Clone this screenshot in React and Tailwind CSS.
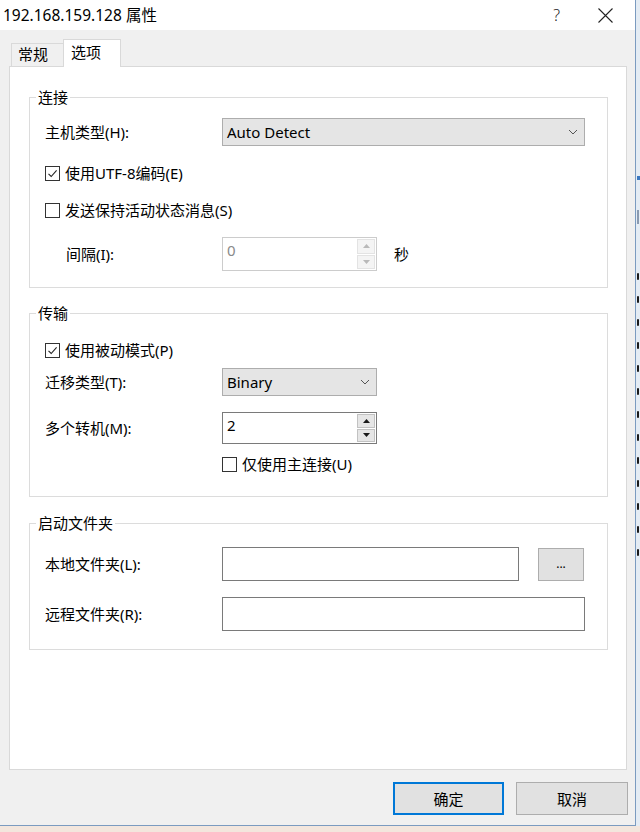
import React from "react";

const FONT = { fontFamily: "'Noto Sans', 'Noto Sans CJK SC', sans-serif" };

function CheckBox({ checked, label }) {
  return (
    <div className="flex items-center h-[20px]">
      <div className="w-[15px] h-[15px] border border-[#333333] bg-white flex items-center justify-center">
        {checked && (
          <svg width="13" height="13" viewBox="0 0 13 13">
            <path d="M2.5 6.8 L5.2 9.5 L10.6 3.4" fill="none" stroke="#222" strokeWidth="1.1" />
          </svg>
        )}
      </div>
      <span className="ml-[5px] text-[15px] leading-[20px] text-black">{label}</span>
    </div>
  );
}

function Chevron() {
  return (
    <svg width="10" height="6" viewBox="0 0 10 6">
      <path d="M1 1 L5 5 L9 1" fill="none" stroke="#555" strokeWidth="1" />
    </svg>
  );
}

function Select({ value, className }) {
  return (
    <div className={"h-[28px] bg-[#e5e5e5] border border-[#adadad] flex items-center pl-[4px] pr-[6px] " + className}>
      <span className="flex-1 text-[15px] leading-[20px] text-black">{value}</span>
      <Chevron />
    </div>
  );
}

function Arrow({ up, color }) {
  return (
    <svg width="7" height="4" viewBox="0 0 7 4">
      {up ? <path d="M0 4 L3.5 0 L7 4 Z" fill={color} /> : <path d="M0 0 L3.5 4 L7 0 Z" fill={color} />}
    </svg>
  );
}

function Spinner({ value, disabled, h }) {
  const border = disabled ? "border-[#cccccc]" : "border-[#7a7a7a]";
  const btn = disabled
    ? "bg-[#f4f4f4] border border-[#e3e3e3]"
    : "bg-[#e6e6e6] border border-[#c2c2c2]";
  const arrow = disabled ? "#b9b9b9" : "#1a1a1a";
  return (
    <div className={"w-[155px] bg-white border flex " + border + " " + h}>
      <span className={"flex-1 pl-[4px] pt-[2px] text-[15px] leading-[20px] " + (disabled ? "text-[#8a8a8a]" : "text-black")}>
        {value}
      </span>
      <div className="w-[20px] flex flex-col p-[1px] gap-[1px]">
        <div className={"flex-1 flex items-center justify-center " + btn}>
          <Arrow up color={arrow} />
        </div>
        <div className={"flex-1 flex items-center justify-center " + btn}>
          <Arrow color={arrow} />
        </div>
      </div>
    </div>
  );
}

function Group({ title, className, children }) {
  return (
    <div className={"relative border border-[#dcdcdc] pl-[15px] pr-[22px] " + className}>
      <span className="absolute -top-[11px] left-[6px] px-[2px] bg-white text-[15px] leading-[20px] text-black">
        {title}
      </span>
      {children}
    </div>
  );
}

function Label({ children, className = "" }) {
  return (
    <span className={"w-[177px] shrink-0 text-[15px] leading-[20px] text-black " + className}>{children}</span>
  );
}

export default function App() {
  const marks = [273, 297, 320, 343, 367, 390, 413, 437, 460, 484, 508, 532, 556];
  return (
    <div className="w-[640px] h-[832px] overflow-hidden flex flex-col bg-[#f3e6dd]" style={FONT}>
      <div className="flex h-[826px]">
        {/* Window */}
        <div className="w-[636px] shrink-0 flex flex-col bg-[#f0f0f0] border-r border-b border-[#7b9bc0]">
          {/* Title bar */}
          <div className="h-[30px] bg-white flex items-center">
            <span className="ml-[3px] text-[15.5px] leading-[20px] text-black">192.168.159.128 属性</span>
            <span className="ml-auto mr-[38px] text-[16px] leading-[20px] text-[#222] font-light">?</span>
            <svg className="mr-[22px]" width="15" height="15" viewBox="0 0 15 15">
              <path d="M0.5 0.5 L14.5 14.5 M14.5 0.5 L0.5 14.5" stroke="#222" strokeWidth="1.1" />
            </svg>
          </div>

          {/* Body */}
          <div className="flex-1 flex flex-col pt-[9px]">
            {/* Tabs */}
            <div className="h-[27px] flex items-end pl-[11px]">
              <div className="w-[52px] h-[23px] border-l border-t border-[#d9d9d9] bg-[#f0f0f0] pl-[6px] text-[15px] leading-[21px] text-black">
                常规
              </div>
              <div className="relative z-10 -mb-[1px] w-[58px] h-[28px] border-l border-t border-r border-[#d9d9d9] bg-white pl-[7px] pt-[2px] text-[15px] leading-[21px] text-black">
                选项
              </div>
            </div>

            {/* Panel */}
            <div className="ml-[9px] w-[618px] h-[704px] border border-[#d9d9d9] bg-white pl-[19px] pt-[30px]">
              <Group title="连接" className="w-[579px] pt-[20px] pb-[16px]">
                <div className="flex items-center">
                  <Label>主机类型(H):</Label>
                  <Select value="Auto Detect" className="flex-1" />
                </div>
                <div className="mt-[17px]">
                  <CheckBox checked label="使用UTF-8编码(E)" />
                </div>
                <div className="mt-[17px]">
                  <CheckBox label="发送保持活动状态消息(S)" />
                </div>
                <div className="mt-[17px] flex items-center">
                  <Label className="pl-[21px]">间隔(I):</Label>
                  <Spinner value="0" disabled h="h-[34px]" />
                  <span className="ml-[17px] text-[15px] leading-[20px] text-black">秒</span>
                </div>
              </Group>

              <Group title="传输" className="mt-[25px] w-[579px] pt-[26px] pb-[22px]">
                <CheckBox checked label="使用被动模式(P)" />
                <div className="mt-[8px] flex items-center">
                  <Label>迁移类型(T):</Label>
                  <Select value="Binary" className="w-[155px]" />
                </div>
                <div className="mt-[16px] flex items-center">
                  <Label>多个转机(M):</Label>
                  <Spinner value="2" h="h-[32px]" />
                </div>
                <div className="mt-[10px] pl-[177px]">
                  <CheckBox label="仅使用主连接(U)" />
                </div>
              </Group>

              <Group title="启动文件夹" className="mt-[26px] w-[579px] pt-[23px] pb-[18px]">
                <div className="flex items-center">
                  <Label>本地文件夹(L):</Label>
                  <div className="w-[297px] h-[34px] bg-white border border-[#7a7a7a]" />
                  <div className="ml-[19px] w-[46px] h-[33px] bg-[#e1e1e1] border border-[#adadad] flex items-center justify-center text-[12px] leading-[12px] text-black">
                    ...
                  </div>
                </div>
                <div className="mt-[16px] flex items-center">
                  <Label>远程文件夹(R):</Label>
                  <div className="flex-1 h-[34px] bg-white border border-[#7a7a7a]" />
                </div>
              </Group>
            </div>

            {/* Buttons */}
            <div className="mt-[12px] flex justify-end gap-[12px] pr-[7px]">
              <div className="w-[111px] h-[33px] bg-[#e1e1e1] border-2 border-[#0078d7] flex items-center justify-center text-[15px] leading-[20px] text-black">
                确定
              </div>
              <div className="w-[112px] h-[33px] bg-[#e1e1e1] border border-[#adadad] flex items-center justify-center text-[15px] leading-[20px] text-black">
                取消
              </div>
            </div>
          </div>
        </div>

        {/* Background window peeking on the right */}
        <div className="flex-1 bg-[#e4ecf4] flex flex-col pl-[1px]">
          <div className="mt-[176px] w-[3px] h-[4px] bg-[#3a78c0]" />
          <div className="mt-[30px] w-[2px] h-[14px] bg-[#8a9ab0]" />
          <div className="mt-[49px] flex flex-col gap-[16px]">
            {marks.map((m) => (
              <div key={m} className="w-[2px] h-[7px] rounded-full bg-[#1a1a1a]" />
            ))}
          </div>
        </div>
      </div>
      <div className="flex-1 bg-[#f3e6dd]" />
    </div>
  );
}
